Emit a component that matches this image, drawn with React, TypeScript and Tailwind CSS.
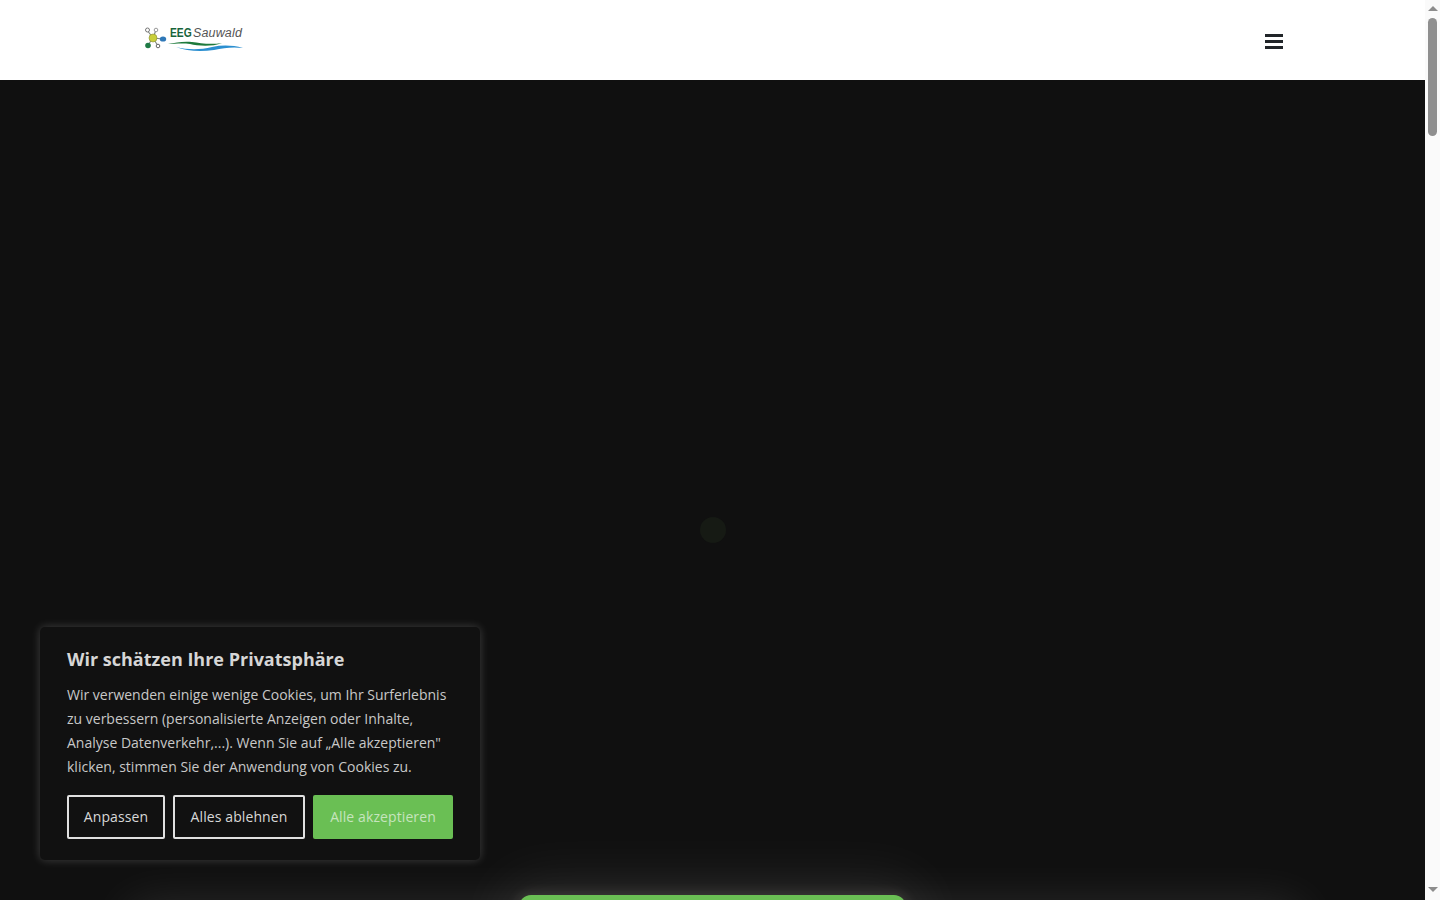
import React from 'react';

const Logo = () => (
  <div className="flex items-start">
    <svg width="25" height="26" viewBox="0 0 25 26">
      <g stroke="#7f857f" strokeWidth="1.1" fill="none">
        <line x1="8" y1="12" x2="2" y2="4" />
        <line x1="8" y1="12" x2="11" y2="4" />
        <line x1="8" y1="12" x2="18" y2="13" />
        <line x1="8" y1="12" x2="3" y2="19" />
        <line x1="8" y1="12" x2="13" y2="20" />
      </g>
      <circle cx="2.5" cy="4" r="2" fill="#fff" stroke="#777" strokeWidth="1" />
      <circle cx="11" cy="4" r="1.8" fill="#fff" stroke="#999" strokeWidth="1" />
      <circle cx="8" cy="12" r="4" fill="#c9cf3a" stroke="#8a8f3a" strokeWidth="0.6" />
      <ellipse cx="18" cy="13" rx="3.2" ry="2.6" fill="#2f78b8" />
      <circle cx="3" cy="19.5" r="2.8" fill="#1f7a45" />
      <circle cx="13" cy="20" r="1.8" fill="#fff" stroke="#666" strokeWidth="1" />
    </svg>
    <div className="relative h-[30px] w-[73px]">
      <div className="flex items-baseline gap-[2px] leading-[14px] whitespace-nowrap">
        <span className="inline-block w-[21px] origin-left scale-x-[0.82] font-['Liberation_Sans',sans-serif] text-[12.5px] font-bold text-[#17643a]">EEG</span>
        <span className="font-['Liberation_Sans',sans-serif] text-[12.5px] font-light italic tracking-[0.15px] text-[#555]">Sauwald</span>
      </div>
      <svg width="76" height="12" viewBox="0 0 76 12" className="absolute left-[-2px] top-[14px]">
        <path d="M0 4 C8 3 14 1 24 2 C32 3 42 5 54 3 C44 7 30 6 22 4 C14 3 6 4 0 4Z" fill="#1e7a3c" />
        <path d="M8 7 C20 10 32 10 44 7 C54 5 64 5 75 8 C64 6.5 56 8 46 10 C32 12 18 11 8 7Z" fill="#2b8fd0" />
      </svg>
    </div>
  </div>
);

const Hamburger = () => (
  <svg width="18" height="15" viewBox="0 0 18 15" className="mt-[34px]">
    <rect x="0" y="0" width="18" height="3" fill="#212529" />
    <rect x="0" y="6" width="18" height="3" fill="#212529" />
    <rect x="0" y="12" width="18" height="3" fill="#212529" />
  </svg>
);

const CookieCard = () => (
  <div className="absolute bottom-[40px] left-[40px] w-[440px] rounded-[5px] bg-[#111111] px-[27px] pb-[21px] pt-[19px] font-['Open_Sans',sans-serif] shadow-[0_0_10px_rgba(255,255,255,0.2)]">
    <h2 className="text-[18px] font-bold leading-[27px] text-[#d6d6d6]">Wir schätzen Ihre Privatsphäre</h2>
    <p className="mt-[10px] text-[14px] leading-[24px] text-[#c8c8c8]">
      Wir verwenden einige wenige Cookies, um Ihr Surferlebnis zu verbessern (personalisierte Anzeigen oder Inhalte, Analyse Datenverkehr,...). Wenn Sie auf „Alle akzeptieren" klicken, stimmen Sie der Anwendung von Cookies zu.
    </p>
    <div className="mt-[16px] flex gap-2">
      <button className="h-[44px] w-[98px] rounded-[2px] border-2 border-[#e0e0e0] pb-[2px] text-[14px] tracking-[0.1px] text-[#d8d8d8]">Anpassen</button>
      <button className="h-[44px] w-[132px] rounded-[2px] border-2 border-[#e0e0e0] pb-[2px] text-[14px] tracking-[0.1px] text-[#d8d8d8]">Alles ablehnen</button>
      <button className="h-[44px] w-[140px] rounded-[2px] bg-[#6abf54] pb-[2px] text-[14px] tracking-[0.1px] text-[#c6e4be]">Alle akzeptieren</button>
    </div>
  </div>
);

const Scrollbar = () => (
  <div className="flex w-[15px] shrink-0 flex-col items-center bg-[#fafafa] pt-[6px]">
    <div className="h-0 w-0 border-x-[5px] border-b-[5px] border-x-transparent border-b-[#8c8c8c]" />
    <div className="mt-[7px] h-[118px] w-[9px] rounded-[5px] bg-[#8f8f8f]" />
    <div className="mt-auto mb-[8px] h-0 w-0 border-x-[5px] border-t-[5px] border-x-transparent border-t-[#8c8c8c]" />
  </div>
);

export default function App() {
  return (
    <div className="flex h-[900px] overflow-hidden bg-white">
      <div className="relative flex min-w-0 flex-1 flex-col">
        <header className="flex h-[80px] shrink-0 items-start justify-between bg-white pl-[145px] pr-[142px]">
          <div className="pt-[26px]">
            <Logo />
          </div>
          <Hamburger />
        </header>
        <main className="relative flex flex-1 flex-col items-center overflow-hidden bg-[#101010] pt-[815px]">
          <div className="absolute left-[130px] top-[825px] h-[60px] w-[1170px] bg-[#101010] shadow-[0_0_50px_rgba(255,255,255,0.12)]" />
          <div className="relative h-[60px] w-[387px] shrink-0 rounded-[12px] bg-[#6abf54] shadow-[0_0_12px_3px_rgba(255,240,220,0.1),0_0_60px_16px_rgba(255,255,255,0.08)]" />
          <div className="absolute left-[700px] top-[437px] h-[26px] w-[26px] rounded-full bg-[#161a14]" />
        </main>
        <CookieCard />
      </div>
      <Scrollbar />
    </div>
  );
}
